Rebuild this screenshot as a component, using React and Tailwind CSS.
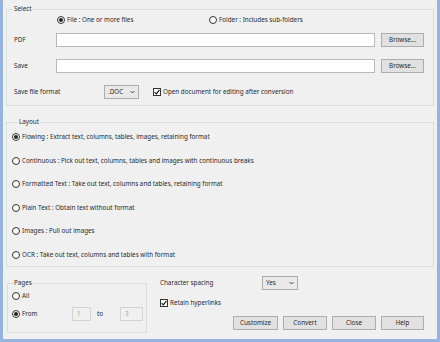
import React from "react";

const font = { fontFamily: '"Noto Sans", "Liberation Sans", sans-serif' };

const Radio = ({ checked, label }) => (
  <div className="flex items-center gap-[2px] h-[12px]">
    <span className="w-[8px] h-[8px] rounded-full border border-[#333] bg-white flex items-center justify-center shrink-0">
      {checked ? <span className="w-[4px] h-[4px] rounded-full bg-[#222]" /> : null}
    </span>
    <span className="whitespace-nowrap">{label}</span>
  </div>
);

const Check = ({ label }) => (
  <div className="flex items-center gap-[2px] h-[10px]">
    <span className="w-[8px] h-[8px] border border-[#333] bg-white flex items-center justify-center shrink-0">
      <svg width="6" height="6" viewBox="0 0 6 6">
        <path d="M0.6 3.2 L2.3 4.9 L5.4 0.9" fill="none" stroke="#111" strokeWidth="1.1" />
      </svg>
    </span>
    <span className="whitespace-nowrap">{label}</span>
  </div>
);

const Button = ({ children, w = "w-[44px]" }) => (
  <div className={`${w} h-[14px] border border-[#adadad] bg-[#e1e1e1] flex items-center justify-center`}>
    {children}
  </div>
);

const Combo = ({ value, w }) => (
  <div className={`${w} h-[14px] border border-[#acacac] bg-[#e9e9e9] flex items-center justify-between pl-[3px] pr-[3px]`}>
    <span>{value}</span>
    <svg width="5" height="4" viewBox="0 0 5 4">
      <path d="M0.5 1 L2.5 3 L4.5 1" fill="none" stroke="#333" strokeWidth="0.9" />
    </svg>
  </div>
);

const layoutOptions = [
  { label: "Flowing :  Extract text, columns, tables, images, retaining format", checked: true },
  { label: "Continuous :  Pick out text, columns, tables and images with continuous breaks" },
  { label: "Formatted Text :  Take out text, columns and tables, retaining format" },
  { label: "Plain Text :  Obtain text without format" },
  { label: "Images :  Pull out images" },
  { label: "OCR :  Take out text, columns and tables with format" },
];

export default function App() {
  return (
    <div
      className="w-[440px] h-[342px] bg-[#f0f0f0] border-x-[3px] border-b-[3px] border-[#94b4df] pl-[3px] pr-[3px] pt-[5px] text-[6.3px] leading-[8px] text-[#2a2a2a]"
      style={font}
    >
      {/* select */}
      <fieldset className="border border-[#dcdcdc] h-[101px] px-[7px]">
        <legend className="ml-[-1px] px-[1px]">Select</legend>
        <div className="flex items-center h-[14px] pl-[43px]">
          <div className="w-[152px]">
            <Radio checked label="File :  One or more files" />
          </div>
          <Radio label="Folder :  Includes sub-folders" />
        </div>
        <div className="flex items-center h-[14px] mt-[6px]">
          <span className="w-[42px]">PDF</span>
          <div className="w-[319px] h-[14px] border border-[#b8b8b8] bg-white" />
          <div className="ml-[6px]">
            <Button w="w-[43px]">Browse...</Button>
          </div>
        </div>
        <div className="flex items-center h-[14px] mt-[12px]">
          <span className="w-[42px]">Save</span>
          <div className="w-[319px] h-[14px] border border-[#b8b8b8] bg-white" />
          <div className="ml-[6px]">
            <Button w="w-[43px]">Browse...</Button>
          </div>
        </div>
        <div className="flex items-center h-[14px] mt-[12px]">
          <span className="w-[90px]">Save file format</span>
          <Combo value=".DOC" w="w-[35px]" />
          <div className="ml-[14px]">
            <Check label="Open document for editing after conversion" />
          </div>
        </div>
      </fieldset>

      {/* layout */}
      <fieldset className="border border-[#dcdcdc] h-[149px] mt-[12px] pl-[5px]">
        <legend className="ml-[6px] px-[1px]">Layout</legend>
        <div className="flex flex-col gap-[11.6px] mt-[5px]">
          {layoutOptions.map((o, i) => (
            <Radio key={i} checked={o.checked} label={o.label} />
          ))}
        </div>
      </fieldset>

      {/* bottom */}
      <div className="flex">
        <fieldset className="border border-[#dcdcdc] w-[140px] h-[54px] mt-[12px] ml-[1px] pl-[4px]">
          <legend className="ml-[1px] px-[1px]">Pages</legend>
          <div className="mt-[3px]">
            <Radio label="All" />
          </div>
          <div className="flex items-center mt-[5px] h-[14px]">
            <div className="w-[60px]">
              <Radio checked label="From" />
            </div>
            <div className="w-[19px] h-[14px] border border-[#d4d4d4] text-[#a0a0a0] pl-[4px] flex items-center">1</div>
            <span className="ml-[6px] w-[23px]">to</span>
            <div className="w-[23px] h-[14px] border border-[#d4d4d4] text-[#a0a0a0] pl-[4px] flex items-center">3</div>
          </div>
        </fieldset>
        <div className="ml-[13px] flex flex-col w-[264px]">
          <div className="flex items-center h-[14px] mt-[9px]">
            <span className="w-[102px]">Character spacing</span>
            <Combo value="Yes" w="w-[36px]" />
          </div>
          <div className="mt-[8px]">
            <Check label="Retain hyperlinks" />
          </div>
          <div className="flex justify-end gap-[5px] mt-[8px]">
            <Button w="w-[45px]">Customize</Button>
            <Button>Convert</Button>
            <Button>Close</Button>
            <Button w="w-[43px]">Help</Button>
          </div>
        </div>
      </div>
    </div>
  );
}
